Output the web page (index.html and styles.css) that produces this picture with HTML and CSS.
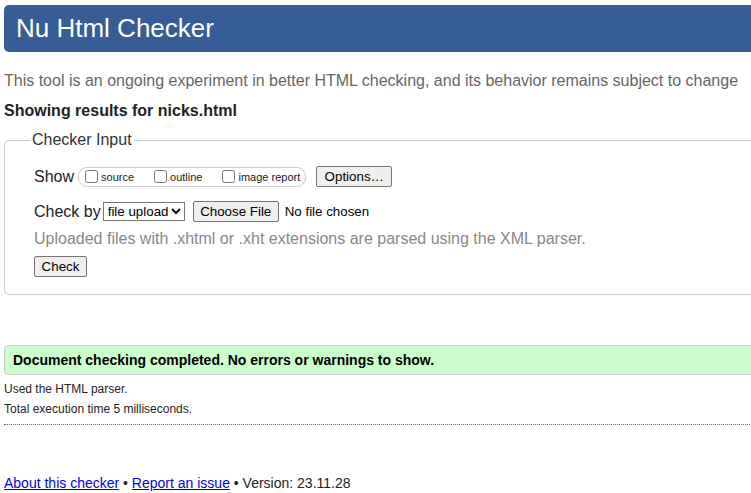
FILE: index.html
```html
<!DOCTYPE html>
<html lang="en">
<head>
<meta charset="utf-8">
<title>Nu Html Checker</title>
<link rel="stylesheet" href="styles.css">
</head>
<body>
<div class="page">
  <h1 class="banner">Nu Html Checker</h1>
  <p class="intro">This tool is an ongoing experiment in better HTML checking, and its behavior remains subject to change</p>
  <p class="showing">Showing results for nicks.html</p>
  <fieldset class="input">
    <legend>Checker Input</legend>
    <div class="row show-row">
      <span class="lbl">Show</span>
      <span class="opts">
        <label class="opt"><input type="checkbox">source</label>
        <label class="opt"><input type="checkbox">outline</label>
        <label class="opt"><input type="checkbox">image report</label>
      </span>
      <button class="btn options">Options…</button>
    </div>
    <div class="row by-row">
      <span class="lbl">Check by</span>
      <select class="sel"><option>file upload</option></select>
      <button class="btn choose">Choose File</button>
      <span class="nofile">No file chosen</span>
    </div>
    <p class="hint">Uploaded files with .xhtml or .xht extensions are parsed using the XML parser.</p>
    <button class="btn check">Check</button>
  </fieldset>
  <p class="success">Document checking completed. No errors or warnings to show.</p>
  <p class="meta">Used the HTML parser.</p>
  <p class="meta">Total execution time 5 milliseconds.</p>
  <hr class="sep">
  <p class="footer"><a href="#">About this checker</a> • <a href="#">Report an issue</a> • Version: 23.11.28</p>
</div>
</body>
</html>
```
FILE: styles.css
```css
html, body {
  margin: 0;
  padding: 0;
  overflow: hidden;
  background: #fff;
}
body {
  font-family: "Liberation Sans", Arial, sans-serif;
  color: #222;
}
.page {
  width: 820px;
  padding: 5px 0 0 4px;
}
.banner {
  margin: 0;
  height: 47px;
  box-sizing: border-box;
  padding: 0 0 0 12px;
  background: #365d95;
  color: #fff;
  font-size: 26px;
  font-weight: normal;
  line-height: 46px;
  border-radius: 5px;
}
.intro {
  margin: 19px 0 0;
  font-size: 16px;
  line-height: 20px;
  color: #666;
}
.showing {
  margin: 10px 0 0;
  font-size: 16px;
  line-height: 20px;
  font-weight: bold;
  color: #222;
}
.input {
  margin: 10px 0 0;
  padding: 17px 0 17px 29px;
  border: 1px solid #ccc;
  border-radius: 5px;
  min-width: 0;
}
.input legend {
  padding: 0 2px;
  margin-left: -4px;
  font-size: 16px;
  color: #333;
}
.row {
  display: flex;
  align-items: center;
}
.lbl {
  font-size: 16px;
  color: #222;
}
.opts {
  display: inline-flex;
  align-items: center;
  margin-left: 4px;
  height: 18px;
  padding: 0 5px 0 4px;
  border: 1px solid #ccc;
  border-radius: 9px;
  gap: 18px;
}
.opt {
  display: inline-flex;
  align-items: center;
  font-size: 11px;
  color: #222;
}
.opt input {
  margin: 0 3px 0 2px;
  width: 13px;
  height: 13px;
}
.btn {
  font-family: "Liberation Sans", Arial, sans-serif;
  font-size: 13.33px;
  color: #000;
  background: #efefef;
  border: 1px solid #767676;
  border-radius: 2px;
  padding: 1px 6px;
  height: 21px;
}
.options {
  margin-left: 10px;
  width: 76px;
}
.by-row {
  margin-top: 14px;
}
.sel {
  margin-left: 2px;
  font-family: "Liberation Sans", Arial, sans-serif;
  font-size: 13.33px;
  height: 19px;
  width: 82px;
  border: 1px solid #767676;
  border-radius: 0;
  background: #fff;
  color: #000;
  padding: 0;
}
.choose {
  margin-left: 8px;
  width: 86px;
}
.nofile {
  margin-left: 6px;
  font-size: 13.33px;
  color: #000;
}
.hint {
  margin: 7px 0 0;
  font-size: 16px;
  line-height: 20px;
  color: #888;
}
.check {
  margin-top: 7px;
  width: 53px;
}
.success {
  margin: 50px 0 0;
  height: 30px;
  box-sizing: border-box;
  padding: 0 0 0 8px;
  line-height: 28px;
  background: #ccffcc;
  border: 1px solid #ccc;
  border-radius: 4px;
  font-size: 14px;
  font-weight: bold;
  color: #000;
}
.meta {
  margin: 7px 0 0;
  font-size: 12px;
  line-height: 14px;
  color: #222;
}
.meta + .meta {
  margin-top: 6px;
}
.sep {
  margin: 8px 0 0;
  border: 0;
  border-top: 1px dotted #666;
  height: 0;
}
.footer {
  margin: 49px 0 0;
  font-size: 14px;
  line-height: 18px;
  color: #222;
}
.footer a {
  color: #00e;
}
```
